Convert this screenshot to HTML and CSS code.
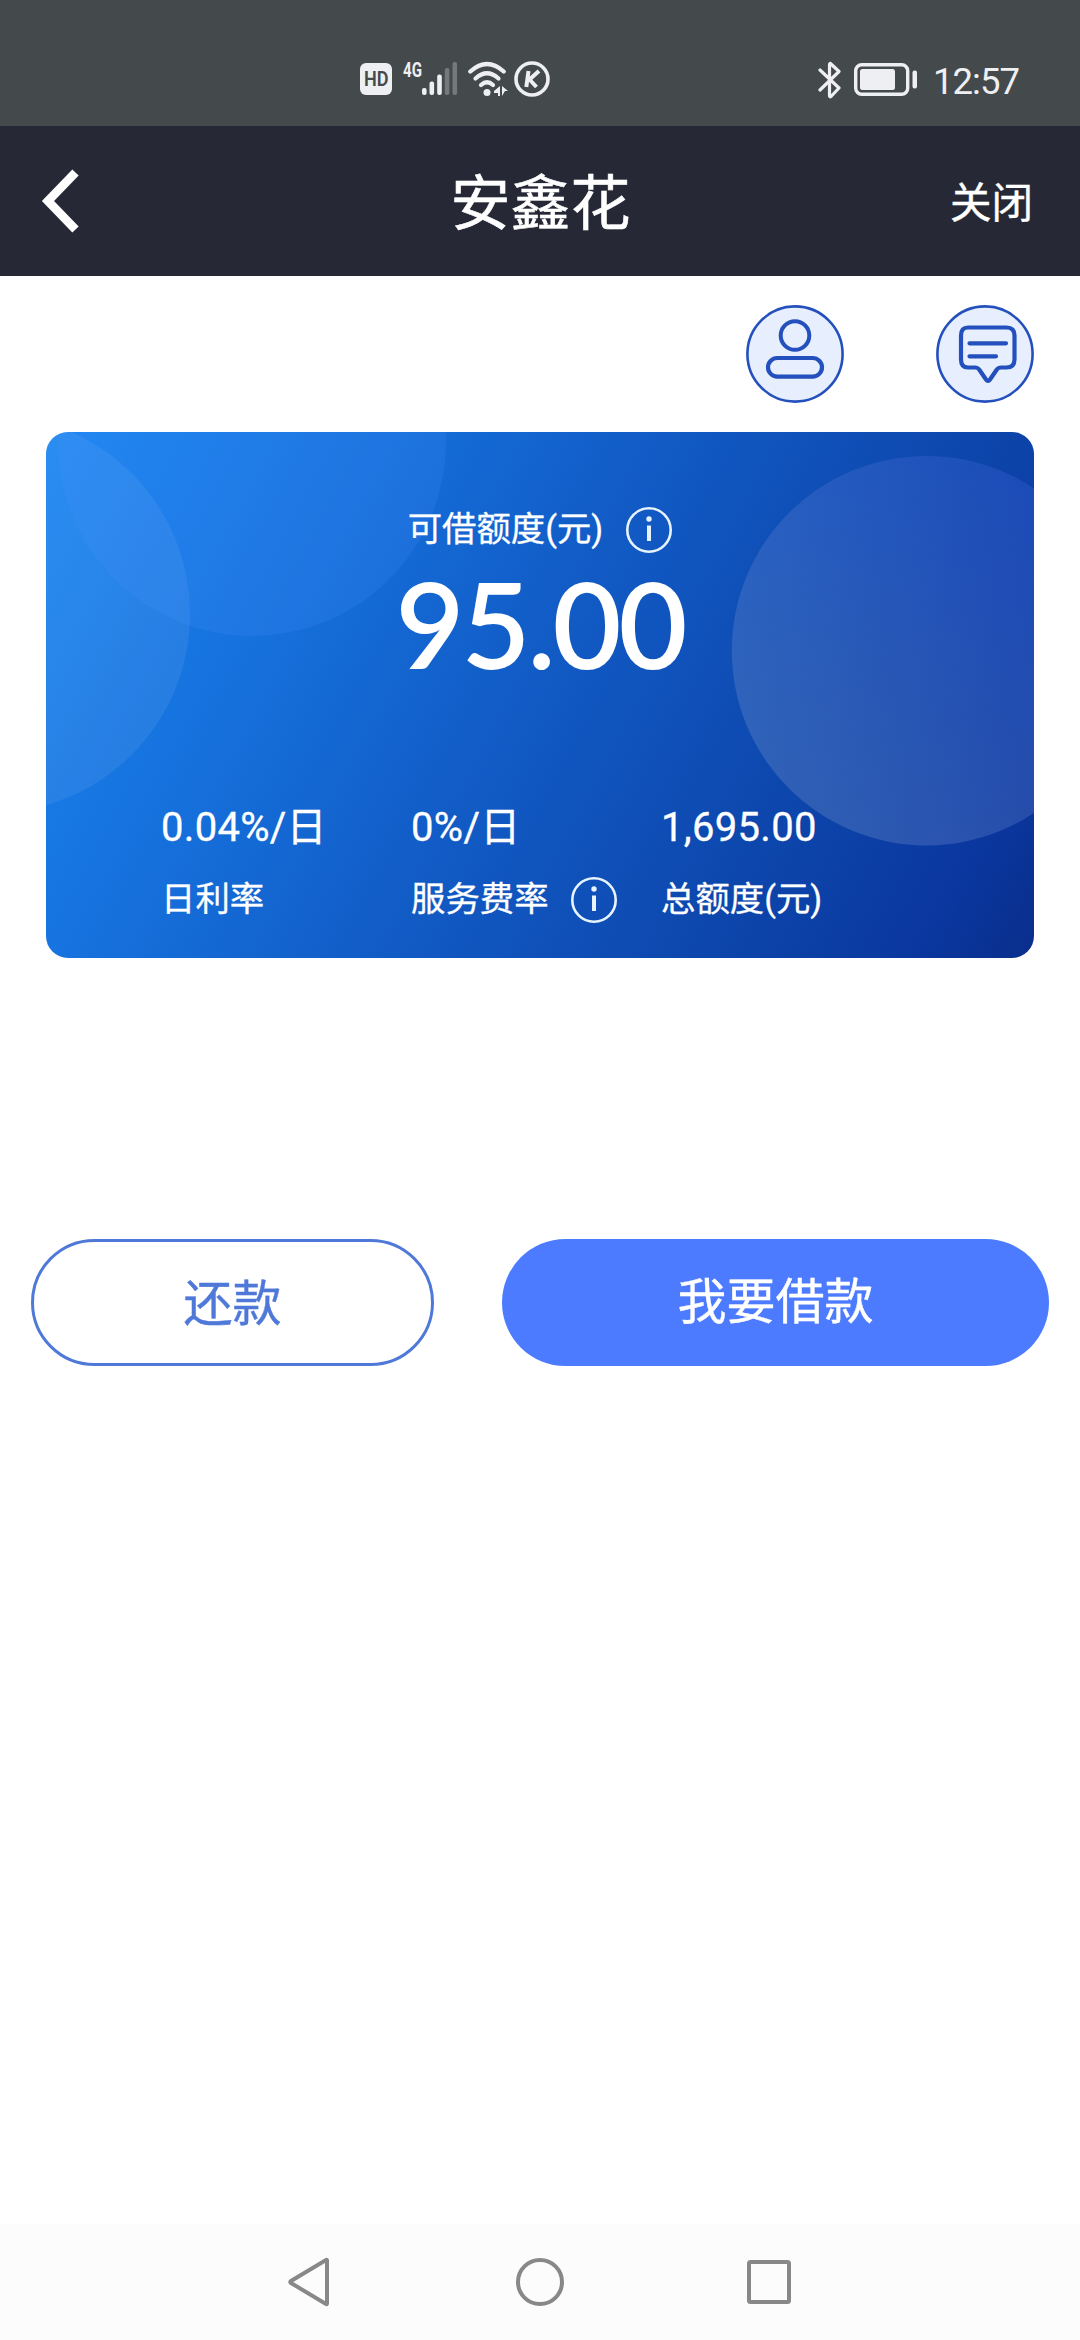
FILE: index.html
```html
<!DOCTYPE html>
<html lang="zh-CN">
<head>
<meta charset="utf-8">
<title>安鑫花</title>
<link rel="stylesheet" href="styles.css">
</head>
<body>
<div class="status">
  <div class="status-left">
    <span class="hd"><span class="hd-text">HD</span></span>
    <span class="net">4G</span>
    <svg class="signal" width="36" height="34" viewBox="0 0 36 34"><g fill="#eeeff2"><rect x="0" y="27" width="4.600" height="7" rx="2"/><rect x="7.500" y="20.500" width="4.600" height="13.500" rx="2"/><rect x="15.200" y="13.500" width="4.600" height="20.500" rx="2"/></g><g fill="#75797c"><rect x="22.800" y="7" width="4.600" height="27" rx="2"/><rect x="30.500" y="1" width="4.600" height="33" rx="2"/></g></svg>
    <svg class="wifi" width="40" height="36" viewBox="0 0 40 36"><g fill="none" stroke="#eeeff2" stroke-width="4.200" stroke-linecap="round"><path d="M2.300 10.500Q19 -4.500 35.700 10.500"/><path d="M7.500 17.500Q19 7 30.500 17.500"/><path d="M13 24Q19 18.500 25 24"/></g><circle cx="19" cy="31.500" r="3.500" fill="#eeeff2"/><path d="M32 25v10h-2v-3h-4v-2zM34 25l6 5h-3l-3 5z" fill="#eeeff2"/></svg>
    <svg class="k" width="36" height="36" viewBox="0 0 36 36" fill="none" stroke="#eeeff2"><circle cx="18" cy="18" r="16" stroke-width="3.600"/><path d="M14.500 10l-2.200 16M25 10l-9.500 8.500L22.500 26" stroke-width="4"/></svg>
  </div>
  <div class="status-right">
    <svg width="24" height="38" viewBox="0 0 24 38" fill="none" stroke="#eeeff2" stroke-width="3.200" stroke-linecap="round" stroke-linejoin="round"><path d="M2 9l19 18-8 8.500q-1.500 1-1.500-1V4q0-2.500 1.500-1l8 7.500L2 29"/></svg>
    <svg class="battery" width="64" height="34" viewBox="0 0 64 34"><rect x="1.700" y="1.700" width="52" height="29.600" rx="6" fill="none" stroke="#eeeff2" stroke-width="3.400"/><rect x="6" y="6" width="35" height="21" rx="2.500" fill="#eeeff2"/><rect x="58.500" y="7.500" width="4.500" height="18" rx="2" fill="#eeeff2"/></svg>
    <span class="time">12:57</span>
  </div>
</div>
<header class="header">
  <svg width="40" height="64" viewBox="0 0 40 64" fill="none" stroke="#fff" stroke-width="8.800"><path d="M34.500 3.500L7 32l27.500 28.500"/></svg>
  <h1 class="title">安鑫花</h1>
  <span class="close">关闭</span>
</header>
<main class="main">
  <div class="tools">
    <svg width="98" height="98" viewBox="0 0 98 98" fill="none" stroke="#2350bd"><circle cx="49" cy="49" r="47.600" fill="#e7eefd" stroke-width="2.600"/><circle cx="49" cy="30.500" r="14.300" stroke-width="4"/><rect x="22" y="53" width="54" height="18.600" rx="9.300" stroke-width="4.200"/></svg>
    <svg width="98" height="98" viewBox="0 0 98 98" fill="none" stroke="#2350bd"><circle cx="49" cy="49" r="47.600" fill="#e7eefd" stroke-width="2.600"/><path d="M32 22.500h38.500q8 0 8 8v24q0 8-8 8H65q-3 0-4.500 2.500L54 74.500q-2 3-4 0L43.500 65Q42 62.500 39 62.500h-7q-7 0-7-8v-24q0-8 7-8zM33.500 38.300h36.500M33.500 51.300h26.500" stroke-width="4.200" stroke-linecap="round" stroke-linejoin="round"/></svg>
  </div>
  <section class="card">
    <svg class="bubbles" width="988" height="526" viewBox="0 0 988 526"><defs><linearGradient id="b" x1="0" y1="1" x2="1" y2="0"><stop offset="0" stop-color="#84a0c6" stop-opacity=".32"/><stop offset="1" stop-color="#3156dc" stop-opacity=".32"/></linearGradient></defs><circle cx="-55" cy="182" r="199" fill="#fff" fill-opacity=".07"/><circle cx="206" cy="10" r="194" fill="#4f92ff" fill-opacity=".17"/><circle cx="880.500" cy="218.700" r="194.700" fill="url(#b)"/></svg>
    <div class="quota-label"><span class="label-text">可借额度(元)</span>
      <svg class="info" width="46" height="46" viewBox="0 0 46 46" fill="none" stroke="#e7f4ff"><circle cx="23" cy="23" r="21.700" stroke-width="2.600"/><path d="M23 18.500v15.500" stroke-width="4"/><circle cx="23" cy="12" r="2.700" fill="#e7f4ff" stroke="none"/></svg>
    </div>
    <div class="amount">95.00</div>
    <div class="stats">
      <div class="stat"><div class="value">0.04%/日</div><div class="label"><span class="label-text">日利率</span></div></div>
      <div class="stat"><div class="value">0%/日</div><div class="label"><span class="label-text">服务费率</span>
        <svg class="info" width="46" height="46" viewBox="0 0 46 46" fill="none" stroke="#e7f4ff"><circle cx="23" cy="23" r="21.700" stroke-width="2.600"/><path d="M23 18.500v15.500" stroke-width="4"/><circle cx="23" cy="12" r="2.700" fill="#e7f4ff" stroke="none"/></svg></div></div>
      <div class="stat"><div class="value">1,695.00</div><div class="label"><span class="label-text">总额度(元)</span></div></div>
    </div>
  </section>
  <div class="actions">
    <button class="btn repay">还款</button>
    <button class="btn borrow">我要借款</button>
  </div>
</main>
<nav class="nav">
  <svg width="52" height="52" viewBox="0 0 52 52"><path d="M42 4.500v43q0 1-1 .5L6 27q-1.500-1 0-2L41 4q1-.5 1 .5z"/></svg>
  <svg width="52" height="52" viewBox="0 0 52 52"><circle cx="26" cy="26" r="22"/></svg>
  <svg width="52" height="52" viewBox="0 0 52 52"><rect x="6" y="6" width="40" height="40" rx="1.500"/></svg>
</nav>
</body>
</html>
```
FILE: styles.css
```css
* { box-sizing: border-box; }
body {
  margin: 0;
  width: 1080px;
  height: 2340px;
  display: flex;
  flex-direction: column;
  background: #fff;
  color: #fff;
  font-family: Roboto, "Noto Sans CJK SC", sans-serif;
}
svg { display: block; flex: none; }
.status {
  height: 126px;
  background: #44494c;
  display: flex;
  justify-content: space-between;
  padding: 61px 61px 0 360px;
  color: #eeeff2;
}
.status-left, .status-right { display: flex; align-items: flex-start; }
.hd {
  display: flex;
  justify-content: center;
  width: 32px;
  height: 32px;
  margin-top: 2px;
  border-radius: 6px;
  background: #eeeff2;
  color: #44494c;
  font-size: 21px;
  font-weight: 600;
  line-height: 33px;
}
.hd-text { transform: scaleX(.86); }
.net {
  width: 19px;
  margin-left: 11px;
  font: 700 21px/18px Roboto, sans-serif;
  transform: scaleX(.72);
  transform-origin: left;
}
.wifi { margin-left: 10px; }
.k { margin-left: 6px; }
.battery { margin: 2px 0 0 12px; }
.time {
  margin-left: 15px;
  font-size: 36.500px;
  line-height: 42px;
  letter-spacing: -1px;
}
.header {
  height: 150px;
  background: #262836;
  display: grid;
  grid-template-columns: 1fr auto 1fr;
  align-items: center;
  padding: 0 47px 0 41px;
}
.title {
  margin: 0;
  padding: 8px 0 0 7px;
  font-size: 60px;
  font-weight: 400;
  line-height: 80px;
  -webkit-text-stroke: .6px;
}
.close {
  justify-self: end;
  padding-top: 6px;
  font-size: 41.500px;
  line-height: 60px;
  -webkit-text-stroke: .4px;
}
.main { flex: 1; }
.tools {
  display: flex;
  justify-content: flex-end;
  gap: 92px;
  padding: 29px 46px;
}
.card {
  position: relative;
  height: 526px;
  margin: 0 46px;
  border-radius: 22px;
  overflow: hidden;
  background: linear-gradient(118deg, #1a85f0 0%, #1672de 24%, #1158c2 52%, #0d47ad 73%, #0a38a0 90%, #0a2e8c 100%);
}
.bubbles { position: absolute; inset: 0; }
.quota-label, .amount, .stats { position: relative; }
.quota-label {
  display: flex;
  justify-content: center;
  align-items: center;
  gap: 23px;
  height: 46px;
  margin-top: 75px;
  font-size: 34.400px;
}
.label-text { padding-bottom: 8px; -webkit-text-stroke: .3px; }
.amount {
  height: 140px;
  padding-left: 0;
  font: 600 119px/140px Lato, sans-serif;
  letter-spacing: -3px;
  text-align: center;
}
.stats {
  display: grid;
  grid-template-columns: repeat(3, 250px);
  margin: 108px 0 0 115px;
}
.value {
  height: 54px;
  font-size: 40px;
  line-height: 54px;
  letter-spacing: .3px;
  -webkit-text-stroke: .3px;
}
.label {
  display: flex;
  align-items: center;
  gap: 22px;
  height: 46px;
  margin-top: 22px;
  font-size: 34.400px;
  white-space: nowrap;
}
.actions {
  display: grid;
  grid-template-columns: 403px 547px;
  justify-content: space-between;
  padding: 281px 31px 0;
}
.btn {
  height: 127px;
  border: 0;
  border-radius: 64px;
  font: 400 49px/60px "Noto Sans CJK SC", sans-serif;
  -webkit-text-stroke: .4px;
}
.repay { border: 3px solid #4f79d8; background: #fff; color: #4f79d8; padding: 0 0 5px; }
.borrow { background: #4c7bff; color: #fff; padding: 0 0 9px; }
.nav {
  height: 116px;
  background: #fcfcfc;
  display: flex;
  align-items: center;
  justify-content: space-between;
  padding: 0 285px;
}
.nav svg { fill: none; stroke: #888; stroke-width: 4; }
```
